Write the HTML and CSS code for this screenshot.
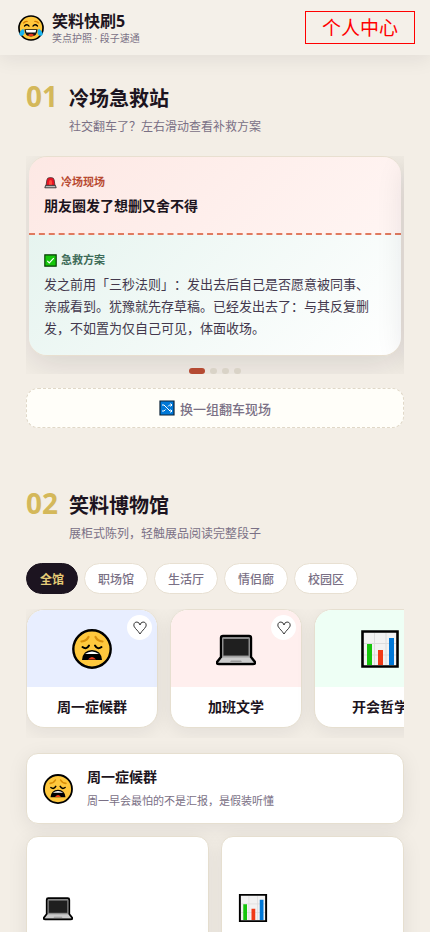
FILE: index.html
```html
<!DOCTYPE html>
<html lang="zh-CN">
<head>
    <meta charset="UTF-8">
    <meta name="viewport" content="width=device-width, initial-scale=1.0">
    <title>笑料快刷5</title>
    <link rel="stylesheet" href="styles.css">
</head>
<body>
    <svg class="icon-defs" aria-hidden="true">
        <symbol id="icon-joy" viewBox="0 0 40 40">
            <circle cx="20" cy="20" r="18.5" fill="#ffc83d" stroke="#000" stroke-width="2.6"/>
            <path d="M8 13q3-4 7-3M25 10q4-1 7 3" fill="none" stroke="#d67d00" stroke-width="1.8"/>
            <path d="M10 17q4-4 7 0M23 17q3-4 7 0" fill="none" stroke="#000" stroke-width="2" stroke-linecap="round"/>
            <path d="M10 22h20q0 11-10 11T10 22z" fill="#111"/>
            <path d="M12 23h16l-1 4H13z" fill="#fff"/>
            <path d="M15 31q5-4 10 0-5 3-10 0z" fill="#e8331c"/>
            <path d="M8 21q4 7 0 10-4 2-6-1 0-5 6-9zM32 21q-4 7 0 10 4 2 6-1 0-5-6-9z" fill="#19b5f1"/>
        </symbol>
        <symbol id="icon-weary" viewBox="0 0 40 40">
            <circle cx="20" cy="20" r="18.7" fill="#ffc83d" stroke="#000" stroke-width="2.4"/>
            <path d="M9.5 12.5q5-.5 7-4.500M30.500 12.500q-5-.5-7-4.500" fill="none" stroke="#d98f0b" stroke-width="2.200" stroke-linecap="round"/>
            <path d="M10.500 18q4 3 6.500-1.500M29.500 18q-4 3-6.500-1.500" fill="none" stroke="#000" stroke-width="2" stroke-linecap="round"/>
            <path d="M10 31q1-10 10-10t10 10z" fill="#000"/>
            <path d="M13 25q7-5 14 0z" fill="#fff"/>
            <path d="M16 30.500q4-5 8 0z" fill="#f03a17"/>
        </symbol>
        <symbol id="icon-laptop" viewBox="0 0 40 40">
            <path d="M5 9q0-2 2-2h26q2 0 2 2v19l4 5q1 2-2 2H3q-3 0-2-2l4-5z" fill="#b5b5b5" stroke="#000" stroke-width="2.400" stroke-linejoin="round"/>
            <path d="M7 9.500h26v17.500H7z" fill="#1f1f1f" stroke="#8c8c8c"/>
            <path d="M6 29h28l3 4.500H3z" fill="#ccc"/>
            <path d="M15 31.500h10l1 1.500H14z" fill="#999"/>
        </symbol>
        <symbol id="icon-chart" viewBox="0 0 40 40">
            <path d="M2.500 2.500h35v35h-35z" fill="#f2f2f2" stroke="#000" stroke-width="2.600"/>
            <path d="M14.500 4v32M26 4v32M4 14.500h32M4 26h32" stroke="#dcdcdc"/>
            <path d="M7 15h5v21H7z" fill="#16c60c"/>
            <path d="M18 21h5v15h-5z" fill="#f03a17"/>
            <path d="M29 9h5v27h-5z" fill="#0078d7"/>
        </symbol>
        <symbol id="icon-siren" viewBox="0 0 16 16">
            <path d="M2.500 12l1-7q.5-3 3-3h3q2.500 0 3 3l1 7z" fill="#e81224" stroke="#4a3030"/>
            <path d="M6 8q0-3 2-3t2 3v3H6z" fill="#ff4a3a"/>
            <path d="M2 11.500h12l1 3H1z" fill="#bbb" stroke="#222"/>
        </symbol>
        <symbol id="icon-check" viewBox="0 0 16 16">
            <path d="M1 1h14v14H1z" fill="#16c60c" stroke="#063c04" stroke-width="1.400"/>
            <path d="M4 8.500l2.500 2.500L12 5" fill="none" stroke="#fff" stroke-width="1.400"/>
        </symbol>
        <symbol id="icon-shuffle" viewBox="0 0 16 16">
            <path d="M1 1h14v14H1z" fill="#0078d7" stroke="#0b2136" stroke-width="1.200"/>
            <path d="M3 5h2l6 6h2M3 11h2l1.500-1.500M9 6.500L10.500 5H13M11.500 3.500L13 5l-1.500 1.500M11.500 9.500L13 11l-1.500 1.500" fill="none" stroke="#fff"/>
        </symbol>
        <symbol id="icon-heart" viewBox="0 0 16 16">
            <path d="M8 14Q6.500 11.500 3.500 8.500 1 6 2 3.800 3 1.800 5 2q2.300.2 3 3 .7-2.800 3-3 2-.2 3 1.800 1 2.200-1.500 4.700Q9.500 11.500 8 14z" fill="none" stroke="#222" stroke-width=".9"/>
        </symbol>
    </svg>

    <header class="topbar">
        <svg class="logo"><use href="#icon-joy"/></svg>
        <div class="brand">
            <h1>笑料快刷5</h1>
            <p>笑点护照 · 段子速通</p>
        </div>
        <button class="user-btn" type="button">个人中心</button>
    </header>

    <main>
        <section class="section">
            <div class="section-head">
                <span class="section-num">01</span>
                <div class="section-title">
                    <h2>冷场急救站</h2>
                    <p>社交翻车了？左右滑动查看补救方案</p>
                </div>
            </div>

            <div class="rescue">
                <div class="rescue-track">
                    <article class="rescue-card">
                        <div class="scene">
                            <div class="tag"><svg><use href="#icon-siren"/></svg>冷场现场</div>
                            <h3>朋友圈发了想删又舍不得</h3>
                        </div>
                        <div class="fix">
                            <div class="tag"><svg><use href="#icon-check"/></svg>急救方案</div>
                            <p>发之前用「三秒法则」：发出去后自己是否愿意被同事、亲戚看到。犹豫就先存草稿。已经发出去了：与其反复删发，不如置为仅自己可见，体面收场。</p>
                        </div>
                    </article>
                    <article class="rescue-card" aria-hidden="true"></article>
                </div>
                <div class="dots">
                    <span class="dot active"></span>
                    <span class="dot"></span>
                    <span class="dot"></span>
                    <span class="dot"></span>
                </div>
            </div>
            <button class="shuffle-btn" type="button"><svg><use href="#icon-shuffle"/></svg>换一组翻车现场</button>
        </section>

        <section class="section">
            <div class="section-head">
                <span class="section-num">02</span>
                <div class="section-title">
                    <h2>笑料博物馆</h2>
                    <p>展柜式陈列，轻触展品阅读完整段子</p>
                </div>
            </div>

            <div class="filters">
                <button class="filter active" type="button">全馆</button>
                <button class="filter" type="button">职场馆</button>
                <button class="filter" type="button">生活厅</button>
                <button class="filter" type="button">情侣廊</button>
                <button class="filter" type="button">校园区</button>
            </div>

            <div class="gallery">
                <article class="exhibit">
                    <div class="exhibit-cover blue"><svg><use href="#icon-weary"/></svg></div>
                    <button class="like" type="button" aria-label="收藏"><svg><use href="#icon-heart"/></svg></button>
                    <h3>周一症候群</h3>
                </article>
                <article class="exhibit">
                    <div class="exhibit-cover pink"><svg><use href="#icon-laptop"/></svg></div>
                    <button class="like" type="button" aria-label="收藏"><svg><use href="#icon-heart"/></svg></button>
                    <h3>加班文学</h3>
                </article>
                <article class="exhibit">
                    <div class="exhibit-cover green"><svg><use href="#icon-chart"/></svg></div>
                    <h3>开会哲学</h3>
                </article>
            </div>

            <div class="wall">
                <article class="wall-card wide">
                    <svg><use href="#icon-weary"/></svg>
                    <div>
                        <h3>周一症候群</h3>
                        <p>周一早会最怕的不是汇报，是假装听懂</p>
                    </div>
                </article>
                <article class="wall-card tall"><svg><use href="#icon-laptop"/></svg></article>
                <article class="wall-card tall"><svg><use href="#icon-chart"/></svg></article>
            </div>
        </section>
    </main>
</body>
</html>
```
FILE: styles.css
```css
* {
    box-sizing: border-box;
    margin: 0;
    padding: 0;
}
body {
    font-family: "Open Sans", "Noto Sans CJK SC", sans-serif;
    background: #f3eee6;
    color: #1c1420;
    text-spacing-trim: space-all;
}
button {
    font-family: inherit;
    cursor: pointer;
}
.icon-defs {
    display: none;
}

/* top bar */
.topbar {
    position: sticky;
    top: 0;
    z-index: 10;
    display: flex;
    align-items: center;
    gap: 8px;
    height: 55px;
    padding: 0 15px 0 18px;
    background: #f4f0e9;
    box-shadow: 0 4px 20px rgba(28, 20, 32, 0.08);
}
.logo {
    width: 26px;
    height: 26px;
}
.brand {
    flex: 1;
}
.brand h1 {
    font-size: 16px;
    line-height: 20px;
}
.brand p {
    font-size: 10px;
    line-height: 14px;
    color: #7a7085;
}
.user-btn {
    width: 110px;
    height: 33px;
    border: 1px solid #f00;
    background: none;
    color: #f00;
    font-size: 19px;
    line-height: 30px;
}

/* sections */
.section {
    padding: 27px 26px 34px;
}
.section-head {
    display: flex;
    gap: 11px;
    margin-bottom: 19px;
}
.section-num {
    font-size: 28px;
    font-weight: 700;
    line-height: 28px;
    color: #d4b85a;
}
.section-title {
    padding-top: 3px;
}
.section-title h2 {
    font-size: 20px;
    line-height: 28px;
}
.section-title p {
    margin-top: 4px;
    font-size: 12px;
    line-height: 20px;
    color: #7a7085;
}

/* rescue cards */
.rescue {
    overflow: hidden;
    padding: 0 3px;
}
.rescue-track {
    display: flex;
    gap: 6px;
}
.rescue-card {
    flex: 0 0 100%;
    border: 1px solid #e8dfd0;
    border-width: 1px 0;
    border-radius: 18px;
    background-clip: padding-box;
    box-shadow: 0 8px 32px rgba(28, 20, 32, 0.12);
}
.scene {
    padding: 16px 20px 16px 15px;
    border-radius: 18px 18px 0 0;
    border-bottom: 2px dashed #e07a5f;
    background: linear-gradient(135deg, #fde8e4, #fff5f3);
}
.fix {
    padding: 16px 20px 16px 15px;
    border-radius: 0 0 18px 18px;
    background: linear-gradient(135deg, #e6f4ef, #fff);
}
.tag {
    display: flex;
    align-items: center;
    gap: 4px;
    font-size: 11px;
    font-weight: 700;
    line-height: 18px;
    color: #b84a32;
}
.tag svg {
    width: 13px;
    height: 13px;
}
.fix .tag {
    color: #3d6b58;
}
.scene h3 {
    margin-top: 4px;
    font-size: 14px;
    line-height: 22px;
}
.fix p {
    margin-top: 4px;
    font-size: 13px;
    line-height: 22px;
    color: #43384d;
}
.dots {
    display: flex;
    justify-content: center;
    gap: 5px;
    margin-top: 12px;
}
.dot {
    width: 7px;
    height: 6px;
    border-radius: 3px;
    background: #d9d3c7;
}
.dot.active {
    width: 16px;
    background: #b54a32;
}
.shuffle-btn {
    display: flex;
    align-items: center;
    justify-content: center;
    gap: 5px;
    width: 100%;
    height: 40px;
    margin-top: 14px;
    border: 1px dashed #e0d8c8;
    border-radius: 12px;
    background: #fffef9;
    color: #7a7085;
    font-size: 13px;
    font-weight: 500;
}
.shuffle-btn svg {
    width: 16px;
    height: 16px;
}

/* museum */
.filters {
    display: flex;
    gap: 6px;
    margin-bottom: 15px;
}
.filter {
    height: 31px;
    padding: 0 13px;
    border: 1px solid #e8e0d2;
    border-radius: 16px;
    background: #fff;
    color: #7a7085;
    font-size: 12px;
    font-weight: 500;
}
.filter.active {
    border-color: #1c1420;
    background: #1c1420;
    color: #e5cc78;
    font-weight: 700;
}
.gallery {
    display: flex;
    gap: 12px;
    overflow: hidden;
    padding-bottom: 10px;
}
.exhibit {
    position: relative;
    flex: 0 0 132px;
    overflow: hidden;
    border: 1px solid #e6dfd0;
    border-radius: 18px;
    background: #fff;
    box-shadow: 0 4px 20px rgba(28, 20, 32, 0.08);
}
.exhibit-cover {
    display: flex;
    align-items: center;
    justify-content: center;
    height: 77px;
}
.exhibit-cover svg {
    width: 40px;
    height: 40px;
}
.blue {
    background: #e8eeff;
}
.pink {
    background: #ffefee;
}
.green {
    background: #eefff5;
}
.exhibit h3 {
    padding: 10px 0;
    font-size: 14px;
    line-height: 20px;
    text-align: center;
}
.like {
    position: absolute;
    top: 5px;
    right: 5px;
    display: flex;
    align-items: center;
    justify-content: center;
    width: 25px;
    height: 25px;
    border: none;
    border-radius: 50%;
    background: #fff;
}
.like svg {
    width: 16px;
    height: 16px;
}
.wall {
    display: grid;
    grid-template-columns: 1fr 1fr;
    gap: 12px;
    margin-top: 15px;
}
.wall-card {
    display: flex;
    align-items: center;
    gap: 14px;
    padding: 13px 16px;
    border: 1px solid #e6dfd0;
    border-radius: 12px;
    background: #fff;
    box-shadow: 0 4px 20px rgba(28, 20, 32, 0.08);
}
.wall-card.wide {
    grid-column: 1 / -1;
}
.wall-card.tall {
    min-height: 144px;
}
.wall-card svg {
    width: 30px;
    height: 30px;
}
.wall-card h3 {
    font-size: 14px;
    line-height: 20px;
}
.wall-card p {
    margin-top: 5px;
    font-size: 11px;
    line-height: 18px;
    color: #7a7085;
}
```
